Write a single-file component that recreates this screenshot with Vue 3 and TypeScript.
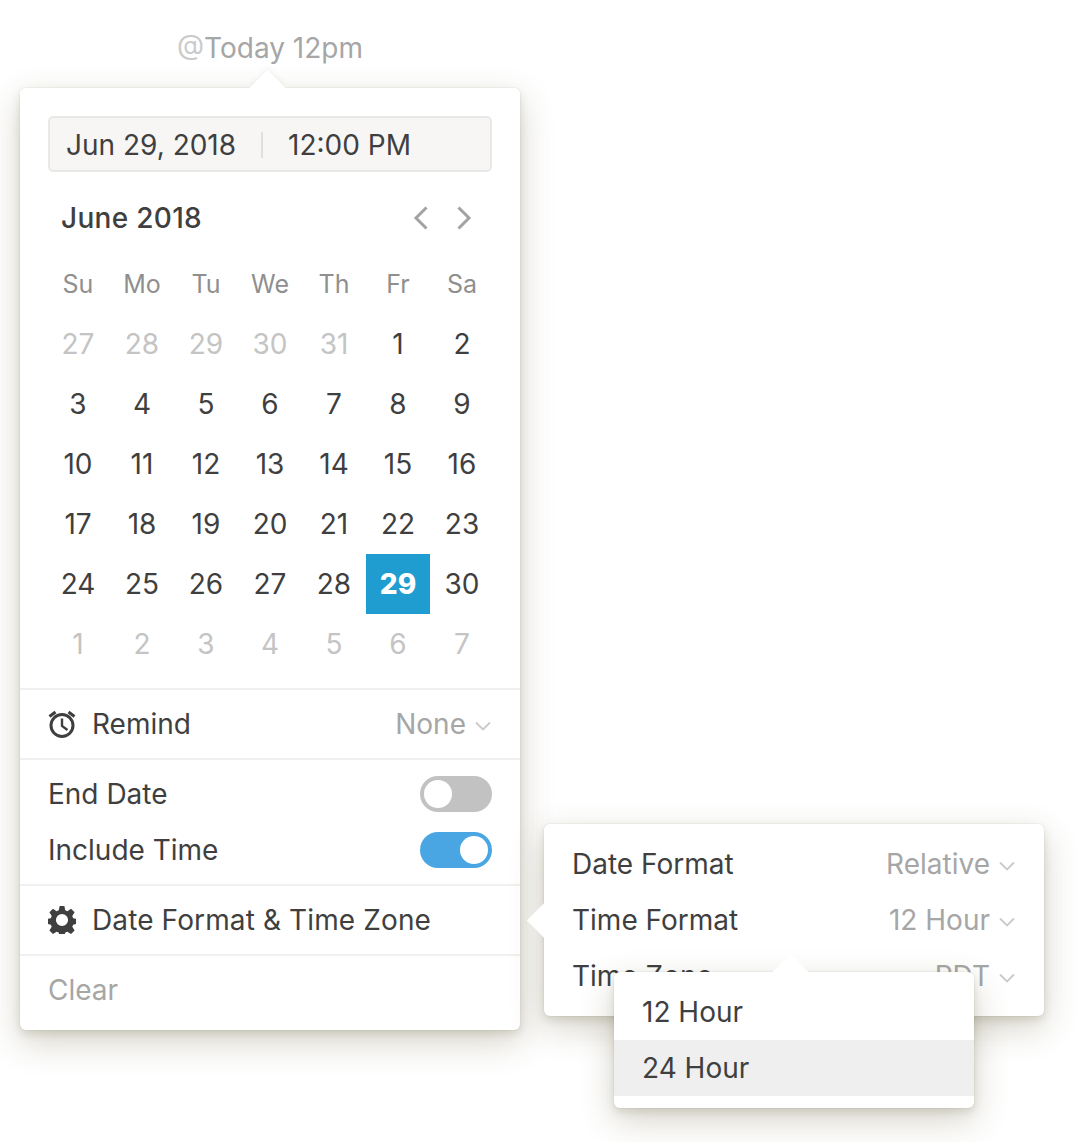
<script setup lang="ts">
const weekdays = ['Su', 'Mo', 'Tu', 'We', 'Th', 'Fr', 'Sa']

interface Day {
  label: number
  muted?: boolean
  selected?: boolean
}

const days: Day[] = [
  ...[27, 28, 29, 30, 31].map((label) => ({ label, muted: true })),
  ...Array.from({ length: 30 }, (_, i) => ({ label: i + 1, selected: i + 1 === 29 })),
  ...[1, 2, 3, 4, 5, 6, 7].map((label) => ({ label, muted: true })),
]

const formats = [
  { label: 'Date Format', value: 'Relative' },
  { label: 'Time Format', value: '12 Hour' },
  { label: 'Time Zone', value: 'PDT' },
]
</script>

<template>
  <div class="page">
    <div class="mention"><span class="at">@</span>Today 12pm</div>

    <section class="card main">
      <span class="arrow arrow-top main-arrow"></span>

      <div class="top">
        <div class="date-input">
          <span class="date-text">Jun 29, 2018</span>
          <span class="date-sep"></span>
          <span>12:00 PM</span>
        </div>

        <div class="month">
          <span class="month-name">June 2018</span>
          <div class="month-nav">
            <svg width="18" height="26" viewBox="0 0 18 26" fill="none">
              <path d="M15.500 2.500 5 13l10.500 10.500" stroke="#a3a3a3" stroke-width="3" />
            </svg>
            <svg width="18" height="26" viewBox="0 0 18 26" fill="none">
              <path d="M2.500 2.500 13 13 2.500 23.500" stroke="#a3a3a3" stroke-width="3" />
            </svg>
          </div>
        </div>

        <div class="weekdays">
          <span v-for="day in weekdays" :key="day">{{ day }}</span>
        </div>
        <div class="days">
          <span
            v-for="(day, i) in days"
            :key="i"
            class="day"
            :class="{ muted: day.muted, selected: day.selected }"
          >{{ day.label }}</span>
        </div>
      </div>

      <div class="row row-link">
        <svg class="icon" width="28" height="28" viewBox="0 0 28 28" fill="none">
          <circle cx="14" cy="15.500" r="11" stroke="#3f3f3f" stroke-width="3" />
          <path d="M14 8.500V16l5.500 4" stroke="#3f3f3f" stroke-width="2.400" />
          <path d="M1.500 6.500 7.500 2M26.500 6.500 20.500 2" stroke="#3f3f3f" stroke-width="3" />
        </svg>
        <span>Remind</span>
        <span class="value">None
          <svg class="chevron" width="16" height="10" viewBox="0 0 16 10" fill="none">
            <path d="M1 1.500 8 8.500l7-7" stroke="#cacaca" stroke-width="1.800" />
          </svg>
        </span>
      </div>

      <div class="toggles">
        <div class="toggle-row">
          <span>End Date</span>
          <span class="toggle"><span class="knob"></span></span>
        </div>
        <div class="toggle-row">
          <span>Include Time</span>
          <span class="toggle on"><span class="knob"></span></span>
        </div>
      </div>

      <div class="row row-link">
        <svg class="icon" width="28" height="28" viewBox="0 0 30 30">
          <path
            fill="#3f3f3f"
            fill-rule="evenodd"
            d="M12.500 0h5l1 4.500 2.300 1 3.900-2.500 3.800 3.800-2.500 3.900 1 2.300 4.500 1v5l-4.500 1-1 2.300 2.500 3.900-3.800 3.800-3.900-2.500-2.300 1-1 4.500h-5l-1-4.500-2.300-1-3.900 2.500-3.800-3.800 2.500-3.900-1-2.300-4.500-1v-5l4.500-1 1-2.300-2.500-3.900 3.800-3.800 3.900 2.500 2.300-1zM15 8.500a6.500 6.500 0 1 0 0 13 6.500 6.500 0 0 0 0-13z"
          />
        </svg>
        <span class="settings-label">Date Format &amp; Time Zone</span>
      </div>

      <div class="row clear">Clear</div>
    </section>

    <section class="card formats">
      <span class="arrow arrow-left"></span>
      <div v-for="item in formats" :key="item.label" class="format-row">
        <span>{{ item.label }}</span>
        <span class="value">{{ item.value }}
          <svg class="chevron" width="16" height="10" viewBox="0 0 16 10" fill="none">
            <path d="M1 1.500 8 8.500l7-7" stroke="#cacaca" stroke-width="1.800" />
          </svg>
        </span>
      </div>
    </section>

    <section class="card options">
      <span class="arrow arrow-top options-arrow"></span>
      <div class="option">12 Hour</div>
      <div class="option active">24 Hour</div>
    </section>
  </div>
</template>

<style>
body {
  background: #fff;
}
</style>

<style scoped>
.page {
  position: relative;
  width: 1078px;
  height: 1142px;
  overflow: hidden;
  padding: 88px 0 0 20px;
  box-sizing: border-box;
  background: #fff;
  color: #3f3f3f;
  font-family: Inter, "Liberation Sans", sans-serif;
  font-size: 28px;
}

.mention {
  position: absolute;
  left: 0;
  top: 32px;
  width: 540px;
  text-align: center;
  line-height: 32px;
  color: #a6a6a6;
}

.at {
  color: #cbcbcb;
}

.card {
  background: #fff;
  border-radius: 6px;
  box-shadow:
    0 0 0 1px rgba(80, 70, 30, 0.04),
    0 4px 8px rgba(80, 70, 30, 0.14),
    0 12px 34px rgba(80, 70, 30, 0.24);
}

.arrow {
  position: absolute;
  width: 25px;
  height: 25px;
  background: #fff;
  transform: rotate(45deg);
}

.main {
  position: relative;
  width: 500px;
  height: 942px;
}

.main-arrow {
  left: 235px;
  top: -13px;
  box-shadow: -2px -2px 4px rgba(80, 70, 30, 0.05);
}

.top {
  position: relative;
  padding: 28px 26px 0;
  height: 600px;
  box-sizing: border-box;
  background: #fff;
  border-radius: 6px 6px 0 0;
}

.date-input {
  display: flex;
  align-items: center;
  height: 56px;
  margin: 0 2px;
  padding: 1px 0 0 16px;
  box-sizing: border-box;
  background: #f7f6f5;
  border: 2px solid #e8e8e7;
  border-radius: 5px;
}

.date-sep {
  width: 2px;
  height: 26px;
  margin: 0 25px;
  background: #dfdfde;
}

.month {
  display: flex;
  align-items: center;
  justify-content: space-between;
  height: 60px;
  margin-top: 16px;
  padding: 0 20px 0 15px;
}

.month-name {
  font-weight: 500;
  letter-spacing: 0.3px;
}

.month-nav {
  display: flex;
  gap: 27px;
}

.month-nav svg {
  display: block;
}

.weekdays,
.days {
  display: grid;
  grid-template-columns: repeat(7, 64px);
}

.weekdays {
  height: 60px;
  margin-top: 6px;
  align-items: center;
  justify-items: center;
  color: #8f8f8f;
  font-size: 25px;
}

.day {
  display: flex;
  align-items: center;
  justify-content: center;
  height: 60px;
}

.day.muted {
  color: #c4c4c4;
}

.day.selected {
  background: #1f9dd0;
  color: #fff;
  font-weight: 800;
}

.row {
  display: flex;
  align-items: center;
  height: 70px;
  padding: 0 28px;
  border-top: 2px solid #f0f0ef;
  box-sizing: border-box;
}

.icon {
  flex: none;
  width: 28px;
  height: 28px;
  margin-right: 16px;
}

.settings-label {
  letter-spacing: 0.12px;
}

.value {
  display: flex;
  align-items: center;
  gap: 9px;
  margin-left: auto;
  margin-right: 1px;
  color: #a6a6a6;
}

.chevron {
  margin-top: 3px;
}

.toggles {
  display: flex;
  flex-direction: column;
  gap: 20px;
  height: 126px;
  padding: 16px 28px 0;
  box-sizing: border-box;
  border-top: 2px solid #f0f0ef;
}

.toggle-row {
  display: flex;
  align-items: center;
  justify-content: space-between;
  height: 36px;
}

.toggle {
  display: flex;
  width: 72px;
  height: 36px;
  padding: 4px;
  box-sizing: border-box;
  background: #c2c2c2;
  border-radius: 18px;
}

.toggle.on {
  justify-content: flex-end;
  background: #4aa6e2;
}

.knob {
  width: 28px;
  height: 28px;
  border-radius: 50%;
  background: #fff;
}

.clear {
  height: 76px;
  padding-bottom: 6px;
  color: #a6a6a6;
}

.formats {
  position: absolute;
  left: 544px;
  top: 824px;
  width: 500px;
  height: 192px;
  padding: 12px 28px;
  box-sizing: border-box;
}

.arrow-left {
  left: -12px;
  top: 84px;
}

.format-row {
  display: flex;
  align-items: center;
  height: 56px;
}

.options {
  position: absolute;
  left: 614px;
  top: 972px;
  width: 360px;
  height: 136px;
  padding-top: 12px;
  box-sizing: border-box;
}

.options-arrow {
  left: 164px;
  top: -13px;
}

.option {
  display: flex;
  align-items: center;
  height: 56px;
  padding: 0 28px;
}

.option.active {
  background: #efefef;
}
</style>
